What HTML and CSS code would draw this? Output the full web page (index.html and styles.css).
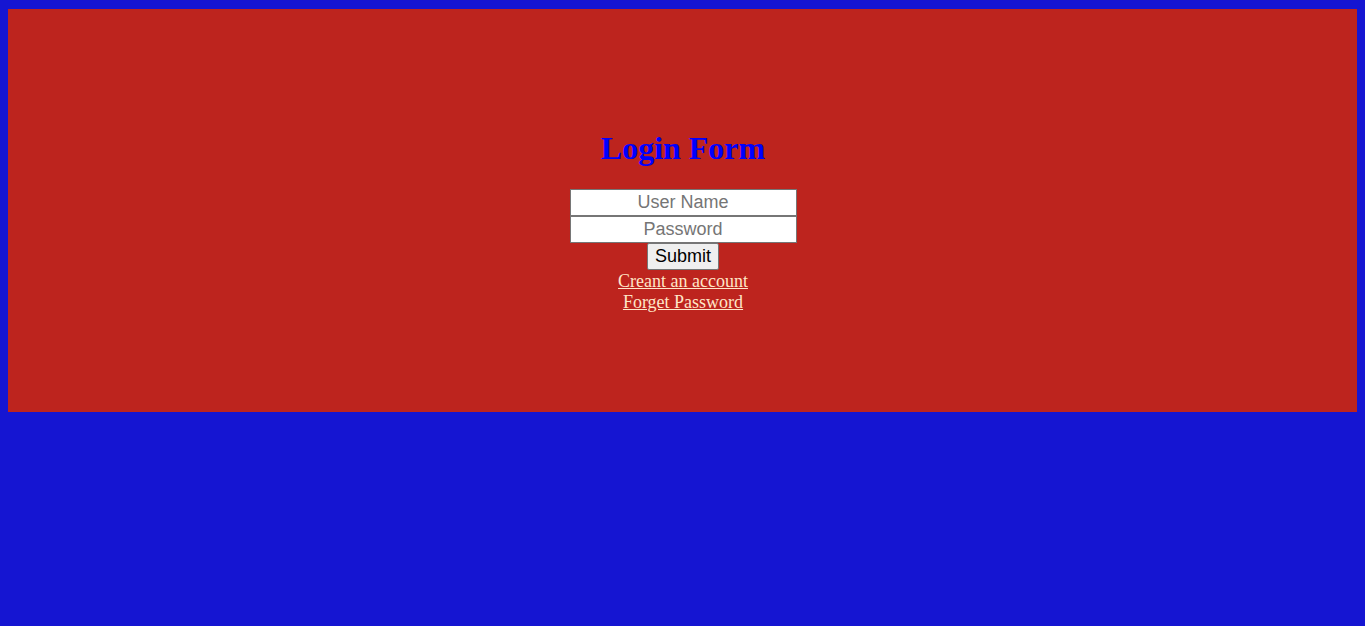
FILE: index.html
```html
<!DOCTYPE html>
<html>
<head>
<meta charset="utf-8">
<title>Login Form</title>
<link rel="stylesheet" href="styles.css">
</head>
<body>
<div class="panel">
  <div class="box">
    <h1 class="title">Login Form</h1>
    <form class="form">
      <input class="field" type="text" placeholder="User Name">
      <input class="field" type="password" placeholder="Password">
      <button class="submit" type="button">Submit</button>
      <a class="link" href="#">Creant an account</a>
      <a class="link" href="#">Forget Password</a>
    </form>
  </div>
</div>
</body>
</html>
```

FILE: styles.css
```css
html, body {
  height: 100%;
}
body {
  margin: 9px 8px 8px;
  background: #1515d2;
  font-family: "Liberation Serif", "Times New Roman", serif;
}
.panel {
  width: 1350px;
  height: 403px;
  background: #bd241e;
  display: flex;
  align-items: center;
  justify-content: center;
}
.box {
  display: flow-root;
  text-align: center;
}
.title {
  margin: 22px 0 22px;
  font-size: 32px;
  font-weight: bold;
  color: #0000ff;
}
.form {
  display: flex;
  flex-direction: column;
  align-items: center;
  margin: 0;
}
.field {
  box-sizing: border-box;
  width: 227px;
  height: 27px;
  margin: 0;
  padding: 1px 2px;
  border: 1px solid #767676;
  font-family: "Liberation Sans", Arial, sans-serif;
  font-size: 18px;
  text-align: center;
  background: #fff;
}
.field::placeholder {
  color: #757575;
}
.submit {
  box-sizing: border-box;
  height: 27px;
  margin: 0 0 1px;
  padding: 1px 7px;
  border: 1px solid #767676;
  border-radius: 2px;
  background: #efefef;
  font-family: "Liberation Sans", Arial, sans-serif;
  font-size: 18px;
  color: #000;
}
.link {
  font-size: 18px;
  line-height: 21px;
  color: #ffe6c8;
  text-decoration: underline;
}
```
